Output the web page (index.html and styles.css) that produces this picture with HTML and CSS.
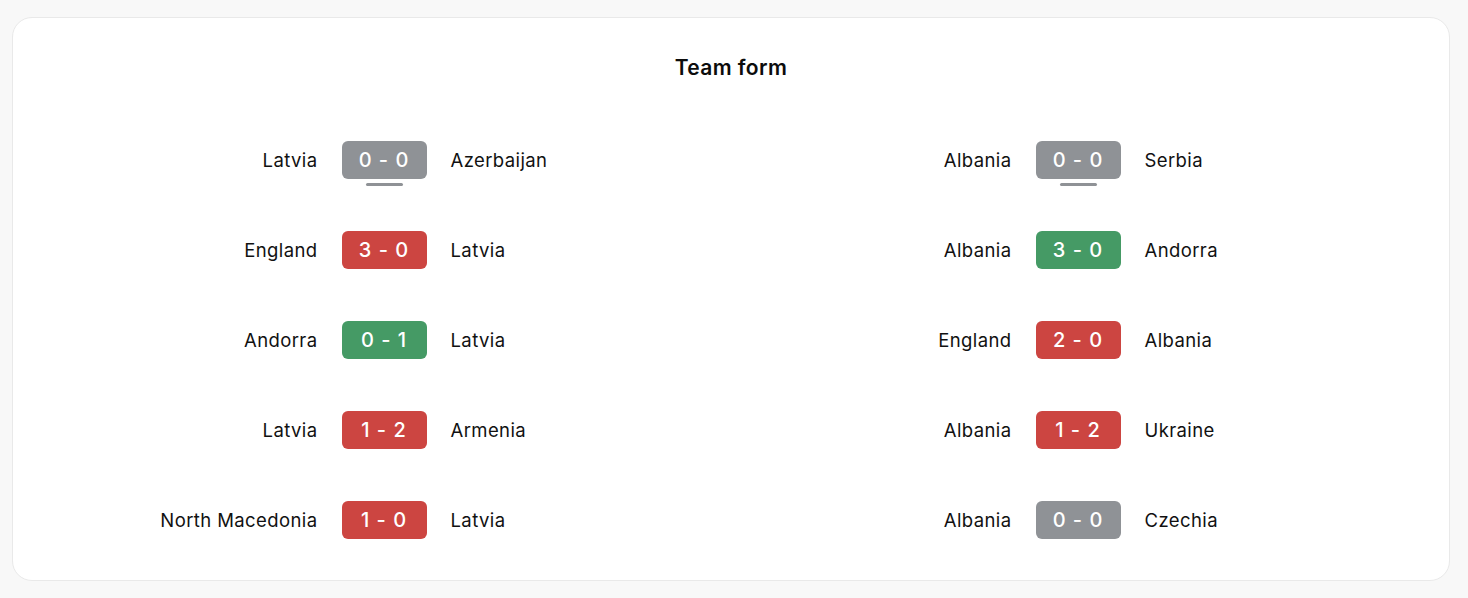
FILE: index.html
```html
<!DOCTYPE html>
<html>
<head>
<meta charset="utf-8">
<link rel="stylesheet" href="styles.css">
</head>
<body>
<div class="card">
  <h2 class="title">Team form</h2>
  <div class="columns">
    <div class="col">
      <div class="match"><span class="home">Latvia</span><span class="score draw current">0 - 0</span><span class="away">Azerbaijan</span></div>
      <div class="match"><span class="home">England</span><span class="score loss">3 - 0</span><span class="away">Latvia</span></div>
      <div class="match"><span class="home">Andorra</span><span class="score win">0 - 1</span><span class="away">Latvia</span></div>
      <div class="match"><span class="home">Latvia</span><span class="score loss">1 - 2</span><span class="away">Armenia</span></div>
      <div class="match"><span class="home">North Macedonia</span><span class="score loss">1 - 0</span><span class="away">Latvia</span></div>
    </div>
    <div class="col">
      <div class="match"><span class="home">Albania</span><span class="score draw current">0 - 0</span><span class="away">Serbia</span></div>
      <div class="match"><span class="home">Albania</span><span class="score win">3 - 0</span><span class="away">Andorra</span></div>
      <div class="match"><span class="home">England</span><span class="score loss">2 - 0</span><span class="away">Albania</span></div>
      <div class="match"><span class="home">Albania</span><span class="score loss">1 - 2</span><span class="away">Ukraine</span></div>
      <div class="match"><span class="home">Albania</span><span class="score draw">0 - 0</span><span class="away">Czechia</span></div>
    </div>
  </div>
</div>
</body>
</html>
```
FILE: styles.css
```css
html, body {
  margin: 0;
  padding: 0;
  background: #f8f8f8;
  font-family: Inter, "Noto Sans", sans-serif;
  color: #111;
}
body {
  padding: 17px 18px 0 12px;
}
.card {
  background: #fff;
  border: 1px solid #e9e9e9;
  border-radius: 20px;
  height: 564px;
  padding: 30px 24px 0;
  box-sizing: border-box;
}
.title {
  margin: 0;
  text-align: center;
  font-size: 21px;
  font-weight: 600;
  letter-spacing: 0.4px;
  line-height: 40px;
  color: #0c0c0c;
}
.columns {
  margin-top: 27px;
  display: grid;
  grid-template-columns: 1fr 1fr;
}
.col {
  display: flex;
  flex-direction: column;
}
.match {
  height: 90px;
  display: grid;
  grid-template-columns: 1fr 85px 1fr;
  column-gap: 24px;
  align-items: center;
  font-size: 18.5px;
  letter-spacing: 0.4px;
}
.home { text-align: right; }
.away { text-align: left; }
.score {
  position: relative;
  height: 38px;
  border-radius: 6px;
  color: #fff;
  font-size: 20px;
  font-weight: 500;
  display: flex;
  align-items: center;
  justify-content: center;
  letter-spacing: 1px;
}
.score.draw { background: #8f9296; }
.score.loss { background: #cc4541; }
.score.win { background: #459a65; }
.score.current::after {
  content: "";
  position: absolute;
  left: 24px;
  width: 37px;
  top: 42px;
  height: 3px;
  border-radius: 2px;
  background: #8f9296;
}
```
